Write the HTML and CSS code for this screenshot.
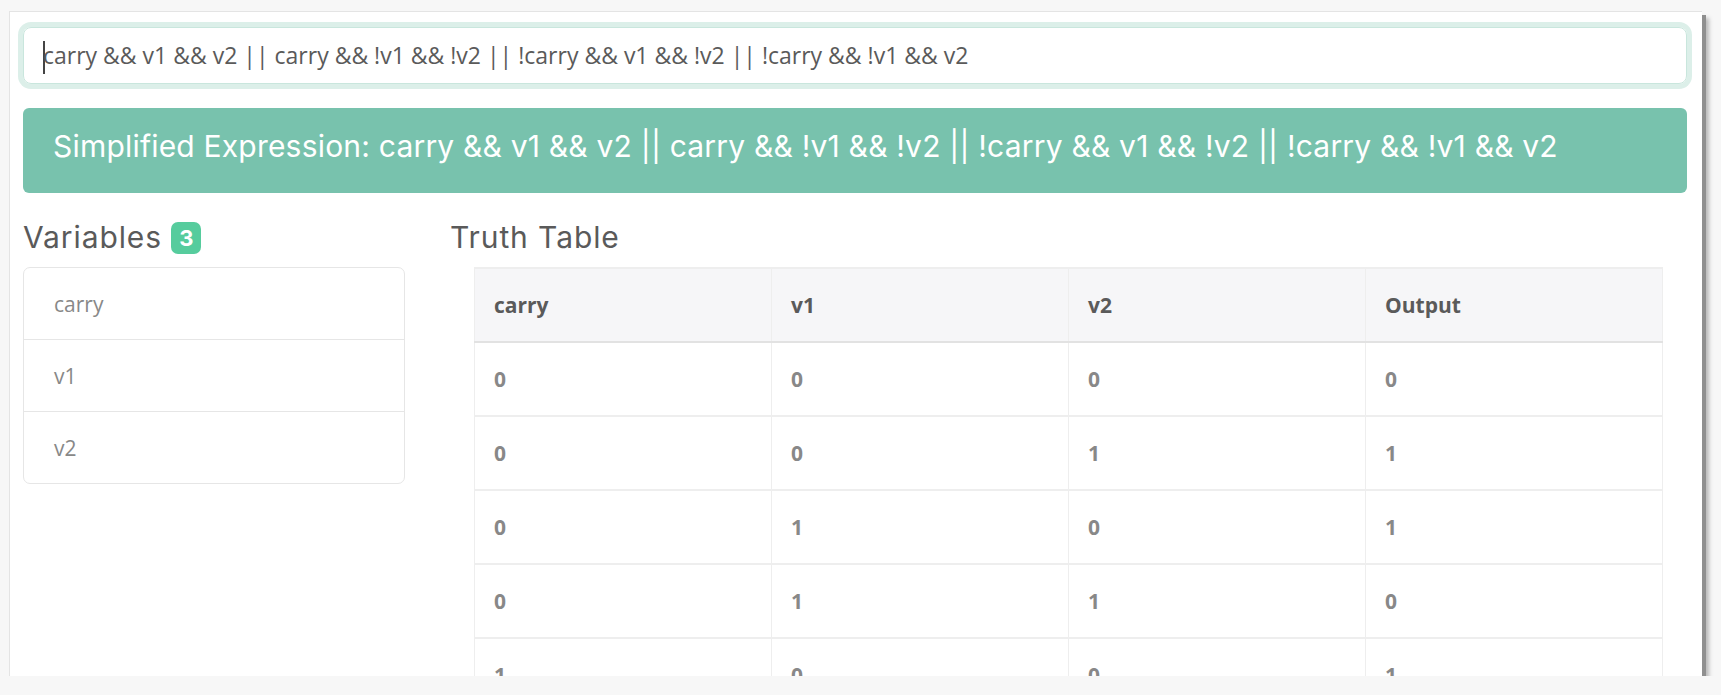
FILE: index.html
```html
<!DOCTYPE html>
<html>
<head>
    <title>Boolean Expression Simplifier</title>
    <link rel="stylesheet" href="styles.css">
</head>
<body>
    <div class="window">
        <div class="container">
            <div class="expr-input"><span class="caret"></span>carry &amp;&amp; v1 &amp;&amp; v2 || carry &amp;&amp; !v1 &amp;&amp; !v2 || !carry &amp;&amp; v1 &amp;&amp; !v2 || !carry &amp;&amp; !v1 &amp;&amp; v2</div>

            <div class="result">
                <h4>Simplified Expression: carry &amp;&amp; v1 &amp;&amp; v2 || carry &amp;&amp; !v1 &amp;&amp; !v2 || !carry &amp;&amp; v1 &amp;&amp; !v2 || !carry &amp;&amp; !v1 &amp;&amp; v2</h4>
            </div>

            <div class="row">
                <div class="col-vars">
                    <h4>Variables <span class="badge">3</span></h4>
                    <ul class="list-group">
                        <li>carry</li>
                        <li>v1</li>
                        <li>v2</li>
                    </ul>
                </div>
                <div class="col-table">
                    <h4>Truth Table</h4>
                    <table class="truth">
                        <thead>
                            <tr><th>carry</th><th>v1</th><th>v2</th><th>Output</th></tr>
                        </thead>
                        <tbody>
                            <tr><td>0</td><td>0</td><td>0</td><td>0</td></tr>
                            <tr><td>0</td><td>0</td><td>1</td><td>1</td></tr>
                            <tr><td>0</td><td>1</td><td>0</td><td>1</td></tr>
                            <tr><td>0</td><td>1</td><td>1</td><td>0</td></tr>
                            <tr><td>1</td><td>0</td><td>0</td><td>1</td></tr>
                            <tr><td>1</td><td>0</td><td>1</td><td>0</td></tr>
                            <tr><td>1</td><td>1</td><td>0</td><td>0</td></tr>
                            <tr><td>1</td><td>1</td><td>1</td><td>1</td></tr>
                        </tbody>
                    </table>
                </div>
            </div>
        </div>
    </div>
</body>
</html>
```

FILE: styles.css
```css
body {
    margin: 0;
    background: #f7f7f7;
    font-family: "Open Sans", "Noto Sans", sans-serif;
    color: #888;
}
.window {
    margin: 11px 0 0 9px;
    width: 1693px;
    height: 665px;
    background: #fff;
    overflow: hidden;
    border-top: 1px solid #e4e4e4;
    border-left: 1px solid #e4e4e4;
    box-sizing: border-box;
    box-shadow: 4px 4px 0 #8f8f8f, 7px 7px 4px rgba(0,0,0,0.25);
}
.container {
    padding: 15px 15px 0 13px;
}
h4 {
    font-family: Inter, "Liberation Sans", sans-serif;
    font-weight: 400;
    font-size: 30px;
    line-height: 36px;
    margin: 0;
    color: #5a5a5a;
    letter-spacing: 0.9px;
}
.expr-input {
    height: 57px;
    box-sizing: border-box;
    padding: 0 19px;
    border: 1px solid #c9e6dd;
    border-radius: 8px;
    box-shadow: 0 0 0 5px #dcefe9;
    font-size: 23px;
    line-height: 55px;
    color: #5a5a5a;
    white-space: nowrap;
}
.caret {
    display: inline-block;
    width: 2px;
    height: 33px;
    background: #444;
    vertical-align: middle;
    margin-right: -2px;
}
.result {
    margin-top: 24px;
    height: 85px;
    box-sizing: border-box;
    padding: 20px 30px;
    background: #78c2ad;
    border-radius: 6px;
}
.result h4 {
    color: #fff;
    white-space: nowrap;
    letter-spacing: 0.2px;
}
.row {
    display: flex;
    margin-top: 26px;
}
.col-vars {
    width: 382px;
    flex: none;
}
.col-vars h4 {
    margin-bottom: 12px;
}
.badge {
    display: inline-block;
    width: 30px;
    height: 32px;
    line-height: 32px;
    text-align: center;
    border-radius: 7px;
    background: #56cc9d;
    color: #fff;
    font-size: 22px;
    font-weight: 700;
    letter-spacing: 0;
    vertical-align: 2px;
}
.list-group {
    list-style: none;
    margin: 0;
    padding: 0;
    border: 1px solid #e6e6e6;
    border-radius: 7px;
}
.list-group li {
    padding: 21px 30px 19px;
    line-height: 31px;
    font-size: 21px;
}
.list-group li + li {
    border-top: 1px solid #e6e6e6;
}
.col-table {
    flex: 1;
    margin-left: 45px;
}
.col-table h4 {
    margin-bottom: 12px;
}
.truth {
    margin: 0 24px;
    width: calc(100% - 48px);
    border-collapse: collapse;
    table-layout: fixed;
    font-size: 21px;
    font-weight: 700;
}
.truth th, .truth td {
    text-align: left;
    padding: 0 19px;
    height: 72px;
    border: 1px solid #eeeeee;
    border-top-width: 2px;
}
.truth th {
    background: #f6f6f8;
    color: #5a5a5a;
    border-bottom: 2px solid #e2e2e2;
}
.truth td {
    color: #888;
}
```
